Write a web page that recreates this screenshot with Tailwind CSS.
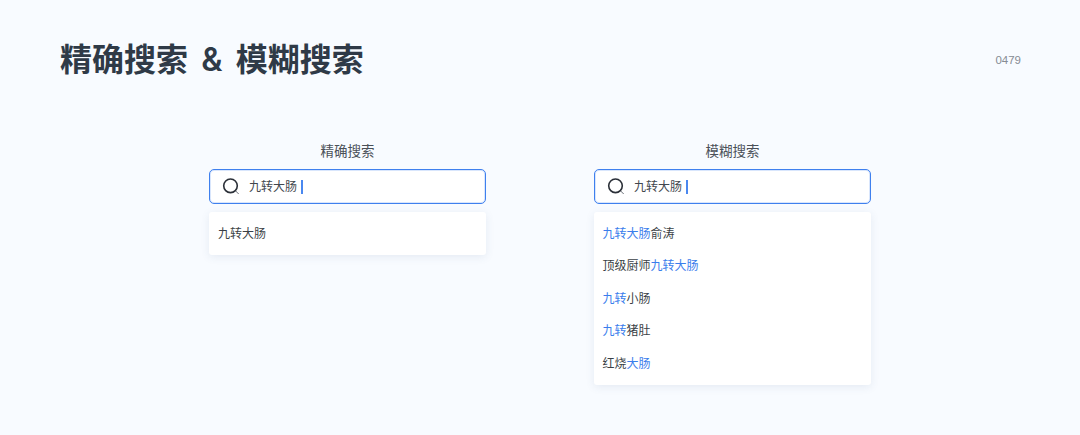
<!DOCTYPE html>
<html lang="zh-CN">
<head>
<meta charset="utf-8">
<script src="https://cdn.jsdelivr.net/npm/@tailwindcss/browser@4"></script>
</head>
<body class="w-[1080px] h-[435px] overflow-hidden bg-[#f8fbff] font-['Inter','Noto_Sans_CJK_SC',sans-serif]">
<header class="flex justify-between pl-[60px] pr-[59px] pt-[38px] h-[120px] items-start">
  <h1 class="text-[32px] leading-[44px] font-semibold text-[#2f3a47] [word-spacing:5.2px]">精确搜索 &amp; 模糊搜索</h1>
  <span class="text-[11.5px] leading-[44px] text-[#868c94] font-['Liberation_Sans',sans-serif]">0479</span>
</header>
<main class="flex pl-[209px] gap-[108px] pt-[21px]">
  <section class="w-[277px]">
    <h2 class="text-[13.5px] leading-[20px] text-[#4a5058] text-center">精确搜索</h2>
    <div class="mt-[8px] h-[35px] border border-[#3f80ee] shadow-[inset_0_0_0_1px_rgba(63,128,238,0.2)] rounded-[5px] bg-white flex items-center pl-[12px]">
      <svg class="w-[19px] h-[19px]" viewBox="0 0 19 19" fill="none" stroke="#2b3038"><circle cx="8.5" cy="8.8" r="6.8" stroke-width="1.6"/><path d="M13.7 14l3 3" stroke-width="1" stroke="#6b7078"/></svg>
      <span class="ml-[8px] text-[12px] text-[#41464d]">九转大肠</span>
      <span class="ml-[4px] w-[2px] h-[14px] bg-[#4a88f0]"></span>
    </div>
    <ul class="mt-[8px] bg-white rounded-[3px] shadow-[0_2px_8px_rgba(60,90,140,0.1)] py-[5px] text-[12px] text-[#3a3f46]">
      <li class="h-[33px] leading-[33px] px-[9px]">九转大肠</li>
    </ul>
  </section>
  <section class="w-[277px]">
    <h2 class="text-[13.5px] leading-[20px] text-[#4a5058] text-center">模糊搜索</h2>
    <div class="mt-[8px] h-[35px] border border-[#3f80ee] shadow-[inset_0_0_0_1px_rgba(63,128,238,0.2)] rounded-[5px] bg-white flex items-center pl-[12px]">
      <svg class="w-[19px] h-[19px]" viewBox="0 0 19 19" fill="none" stroke="#2b3038"><circle cx="8.5" cy="8.8" r="6.8" stroke-width="1.6"/><path d="M13.7 14l3 3" stroke-width="1" stroke="#6b7078"/></svg>
      <span class="ml-[8px] text-[12px] text-[#41464d]">九转大肠</span>
      <span class="ml-[4px] w-[2px] h-[14px] bg-[#4a88f0]"></span>
    </div>
    <ul class="mt-[8px] bg-white rounded-[3px] shadow-[0_2px_8px_rgba(60,90,140,0.1)] pt-[5.5px] pb-[5px] text-[12px] text-[#3a3f46]">
      <li class="h-[32.5px] leading-[32.5px] px-[8.5px]"><span class="text-[#3a7dec]">九转大肠</span>俞涛</li>
      <li class="h-[32.5px] leading-[32.5px] px-[8.5px]">顶级厨师<span class="text-[#3a7dec]">九转大肠</span></li>
      <li class="h-[32.5px] leading-[32.5px] px-[8.5px]"><span class="text-[#3a7dec]">九转</span>小肠</li>
      <li class="h-[32.5px] leading-[32.5px] px-[8.5px]"><span class="text-[#3a7dec]">九转</span>猪肚</li>
      <li class="h-[32.5px] leading-[32.5px] px-[8.5px]">红烧<span class="text-[#3a7dec]">大肠</span></li>
    </ul>
  </section>
</main>
</body>
</html>
